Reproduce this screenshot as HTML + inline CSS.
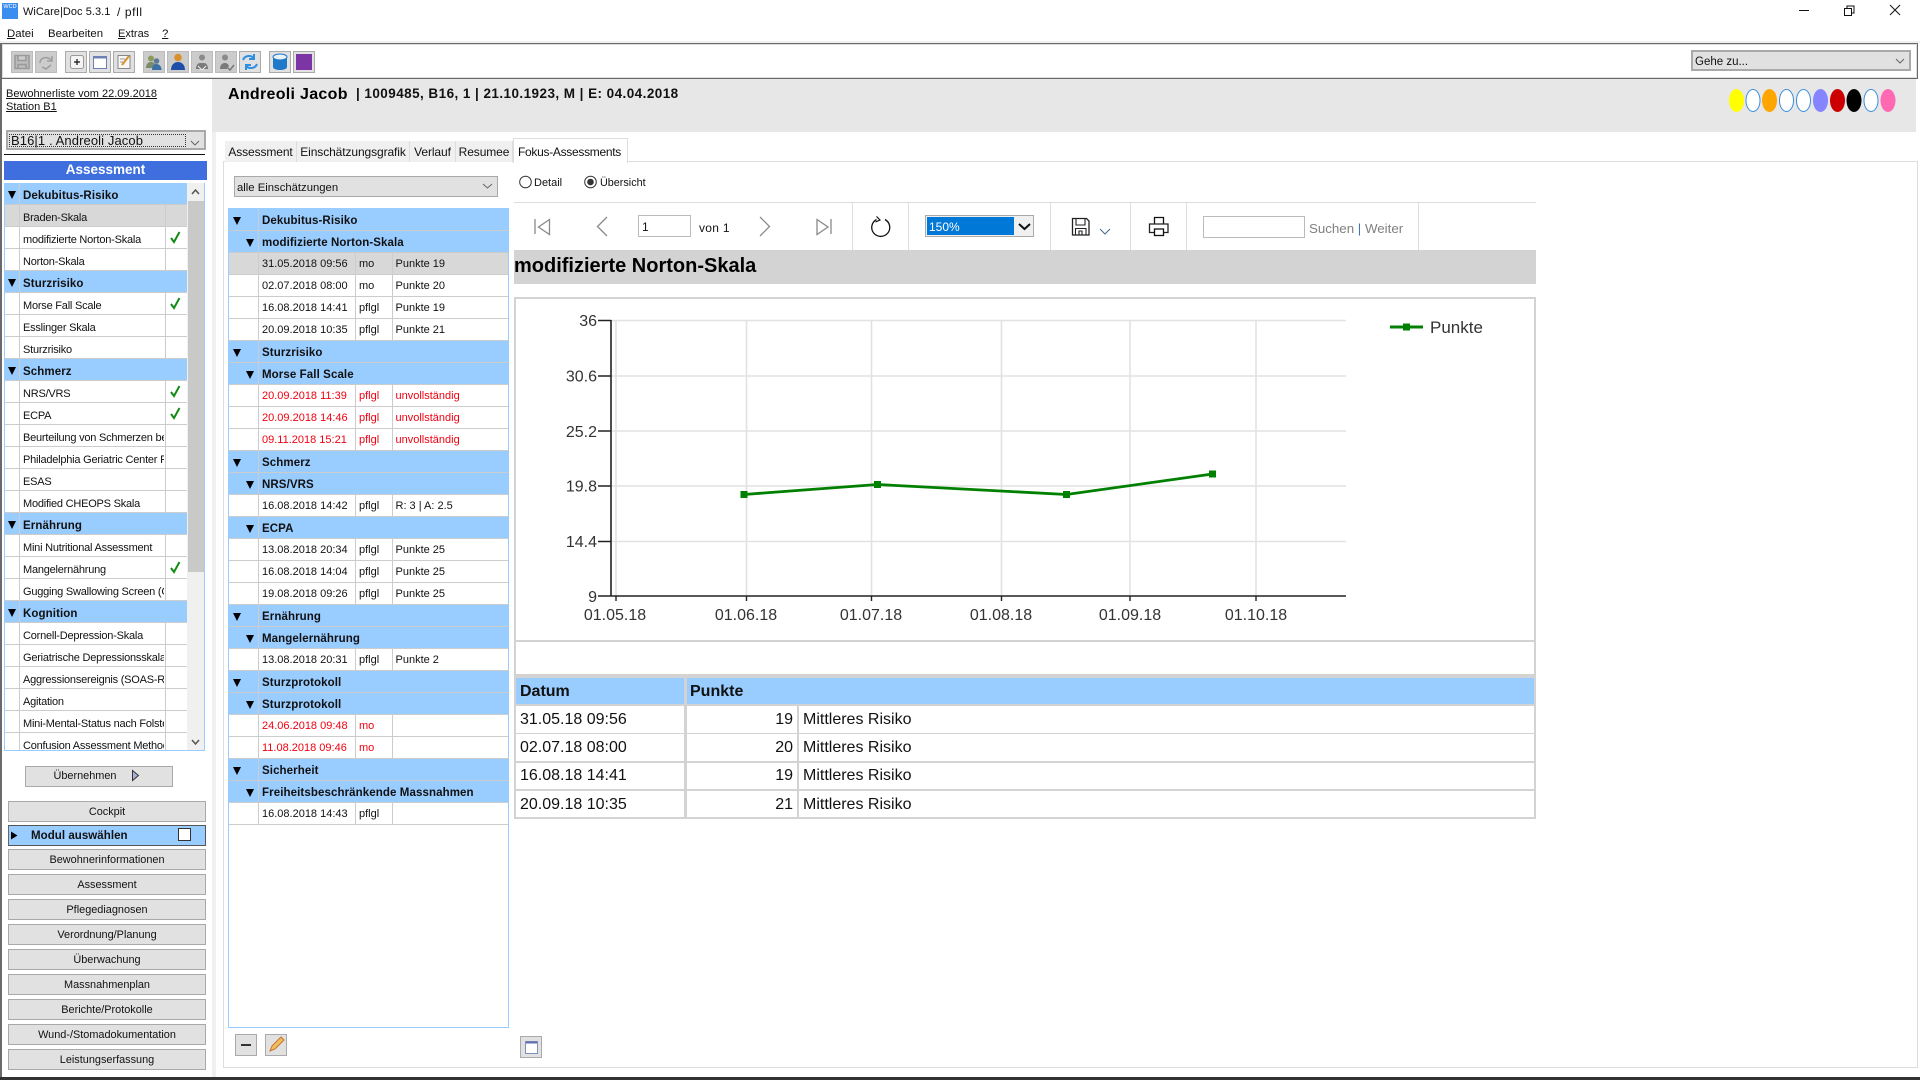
<!DOCTYPE html>
<html lang="de"><head><meta charset="utf-8"><title>WiCare|Doc</title>
<style>
html,body{margin:0;padding:0;background:#fff}
body{width:1920px;height:1080px;position:relative;overflow:hidden;font:11px "Liberation Sans",sans-serif;color:#111}
.a{position:absolute;white-space:nowrap;box-sizing:border-box}
.u{text-decoration:underline}
.b{background:#e1e1e1;border:1px solid #a9a9a9;text-align:center;font-size:10.9px;line-height:21px;height:21px;left:8px;width:198px}
.tb{width:22px;height:22px;top:51px;background:#e1e1e1;border:1px solid #aaa}
.tb.d{background:#ccc;border-color:#bbb}
.tab{top:141px;height:21px;background:#f0f0f0;border-right:1px solid #ddd;font-size:12px;line-height:22px;text-align:center;letter-spacing:-.1px}
#ls{left:4px;top:183px;width:201px;height:568px;border:1px solid #9cf;border-top:0;overflow:hidden}
.r{position:relative;height:22px;width:182px;border-bottom:1px solid #ccc;box-sizing:border-box;line-height:21px;overflow:hidden}
.r i{position:absolute;left:14px;top:0;bottom:0;width:1px;background:#ccc}
.r em{position:absolute;left:160px;top:0;bottom:0;width:1px;background:#ccc}
.r span{position:absolute;left:18px;top:3px;width:141px;overflow:hidden;white-space:nowrap;letter-spacing:-.22px}
.h{background:#9cf}
.h span{font-weight:bold;font-size:11.5px;letter-spacing:.1px;width:160px}
.h em{display:none}
.s{background:#d8d8d8}
.t{position:absolute;width:0;height:0;border-left:4.5px solid transparent;border-right:4.5px solid transparent;border-top:8px solid #000;top:8px;left:3px}
#tr{left:228px;top:208px;width:281px;height:820px;border:1px solid #9cf;overflow:hidden}
.q{position:relative;height:22px;width:279px;border-bottom:1px solid #ccc;box-sizing:border-box;line-height:21px;white-space:nowrap;overflow:hidden}
.q i{position:absolute;top:0;bottom:0;width:1px;background:#ccc}
.q i.c1{left:29px}.q i.c2{left:126px}.q i.c3{left:163px}
.q span{position:absolute;top:1px}
.q .d1{left:33px}.q .d2{left:130px}.q .d3{left:166.5px}
.q.h .d1{font-weight:bold;font-size:11.5px;letter-spacing:.1px;top:2px}
.q .t{left:3.5px}
.q .t.k{left:16.5px}
.red{color:#f00010}
.sep{background:#ddd;width:1px;top:202px;height:48px}
.td{font-size:16px;line-height:28px;color:#111;background:#fff;height:27px}
</style></head><body>

<!-- title bar -->
<div class="a" style="left:2px;top:3px;width:16px;height:16px;background:#3a8ef0;color:#fff;font-size:5.5px;line-height:9px;text-align:center">WCD</div>
<div class="a" style="left:23px;top:5px;font-size:11px;line-height:14px;letter-spacing:.05px">WiCare|Doc 5.3.1</div>
<div class="a" style="left:117px;top:5px;font-size:12px;line-height:14px;letter-spacing:.6px">/ pfll</div>
<div class="a" style="left:7px;top:27px;font-size:11.4px;line-height:14px"><span class="u">D</span>atei</div>
<div class="a" style="left:48px;top:27px;font-size:11.4px;line-height:14px">Bearbeiten</div>
<div class="a" style="left:118px;top:27px;font-size:11px;line-height:14px"><span class="u">E</span>xtras</div>
<div class="a u" style="left:162px;top:27px;font-size:11.4px;line-height:14px">?</div>

<!-- toolbar frame -->
<div class="a" style="left:0;top:41px;width:1920px;height:2px;background:#f0f0f0"></div>
<div class="a" style="left:0;top:43px;width:1918px;height:36px;border:1px solid #6a6a6a;border-left-width:2px;background:#fff"></div>
<div class="a" style="left:2px;top:44px;width:1915px;height:34px;border:1px solid #ddd"></div>
<div class="a tb d" style="left:11px"></div><div class="a tb d" style="left:35px"></div>
<div class="a tb" style="left:65px"></div><div class="a tb" style="left:89px"></div><div class="a tb" style="left:113px"></div>
<div class="a tb d" style="left:143px"></div><div class="a tb d" style="left:167px"></div><div class="a tb d" style="left:191px"></div><div class="a tb d" style="left:215px"></div><div class="a tb" style="left:239px"></div>
<div class="a tb" style="left:269px"></div><div class="a tb" style="left:293px"></div>
<div class="a" style="left:1691px;top:50px;width:220px;height:21px;background:#e1e1e1;border:2px solid #a9a9a9;font-size:11.5px;line-height:20px;padding-left:2px">Gehe zu...</div>

<!-- left edge / bottom -->
<div class="a" style="left:0;top:79px;width:2px;height:1000px;background:#6a6a6a"></div>
<div class="a" style="left:0;top:1077px;width:1920px;height:3px;background:#333"></div>

<!-- header -->
<div class="a" style="left:212px;top:79px;width:1704px;height:53px;background:#e7e7e7"></div>
<div class="a" style="left:212px;top:132px;width:4px;height:945px;background:#f0f0f0"></div>
<div class="a" style="left:228px;top:85px;font-weight:bold;font-size:16px;line-height:20px;letter-spacing:.3px;color:#000">Andreoli Jacob</div>
<div class="a" style="left:356px;top:85px;font-weight:bold;font-size:13.5px;line-height:17px;letter-spacing:.44px;color:#111">| 1009485, B16, 1 | 21.10.1923, M | E: 04.04.2018</div>

<!-- sidebar top -->
<div class="a u" style="left:6px;top:88px;line-height:13px">Bewohnerliste vom 22.09.2018</div>
<div class="a u" style="left:6px;top:101px;line-height:13px">Station B1</div>
<div class="a" style="left:6px;top:130px;width:200px;height:20px;background:#e1e1e1;border:2px solid #a9a9a9"></div>
<div class="a" style="left:9px;top:134px;width:177px;height:13px;border:1px dotted #333;font-size:13px;line-height:11px;padding-left:1px;letter-spacing:.1px">B16|1 . Andreoli Jacob</div>
<div class="a" style="left:4px;top:154px;width:201px;height:1px;background:#111"></div>
<div class="a" style="left:4px;top:161px;width:203px;height:19px;background:#3f6fdf;color:#fff;font-weight:bold;font-size:13.5px;line-height:18px;text-align:center">Assessment</div>

<!-- assessment list -->
<div class="a" id="ls">
<div class="r h"><b class="t"></b><i></i><span>Dekubitus-Risiko</span></div>
<div class="r s"><i></i><em></em><span>Braden-Skala</span></div>
<div class="r"><i></i><em></em><span>modifizierte Norton-Skala</span></div>
<div class="r"><i></i><em></em><span>Norton-Skala</span></div>
<div class="r h"><b class="t"></b><i></i><span>Sturzrisiko</span></div>
<div class="r"><i></i><em></em><span>Morse Fall Scale</span></div>
<div class="r"><i></i><em></em><span>Esslinger Skala</span></div>
<div class="r"><i></i><em></em><span>Sturzrisiko</span></div>
<div class="r h"><b class="t"></b><i></i><span>Schmerz</span></div>
<div class="r"><i></i><em></em><span>NRS/VRS</span></div>
<div class="r"><i></i><em></em><span>ECPA</span></div>
<div class="r"><i></i><em></em><span>Beurteilung von Schmerzen bei Demenz</span></div>
<div class="r"><i></i><em></em><span>Philadelphia Geriatric Center Pain</span></div>
<div class="r"><i></i><em></em><span>ESAS</span></div>
<div class="r"><i></i><em></em><span>Modified CHEOPS Skala</span></div>
<div class="r h"><b class="t"></b><i></i><span>Ernährung</span></div>
<div class="r"><i></i><em></em><span>Mini Nutritional Assessment</span></div>
<div class="r"><i></i><em></em><span>Mangelernährung</span></div>
<div class="r"><i></i><em></em><span>Gugging Swallowing Screen (GUSS)</span></div>
<div class="r h"><b class="t"></b><i></i><span>Kognition</span></div>
<div class="r"><i></i><em></em><span>Cornell-Depression-Skala</span></div>
<div class="r"><i></i><em></em><span>Geriatrische Depressionsskala</span></div>
<div class="r"><i></i><em></em><span>Aggressionsereignis (SOAS-R)</span></div>
<div class="r"><i></i><em></em><span>Agitation</span></div>
<div class="r"><i></i><em></em><span>Mini-Mental-Status nach Folstein</span></div>
<div class="r"><i></i><em></em><span>Confusion Assessment Method</span></div>
<div class="a" style="left:182px;top:0;width:17px;height:568px;background:#f0f0f0"></div>
<div class="a" style="left:183px;top:18px;width:16px;height:371px;background:#c9c9c9"></div>
</div>

<!-- sidebar buttons -->
<div class="a b" style="left:25px;top:766px;width:148px;line-height:19px;padding-right:28px">Übernehmen</div>
<div class="a b" style="top:801px">Cockpit</div>
<div class="a" style="left:8px;top:825px;width:198px;height:21px;background:#9cf;border:1px solid #555;border-left-color:#666"></div>
<div class="a" style="left:31px;top:828px;font-weight:bold;font-size:11.5px;line-height:16px;letter-spacing:.05px">Modul auswählen</div>
<div class="a" style="left:178px;top:828px;width:13px;height:13px;background:#fff;border:1px solid #333"></div>
<div class="a b" style="top:849px">Bewohnerinformationen</div>
<div class="a b" style="top:874px">Assessment</div>
<div class="a b" style="top:899px">Pflegediagnosen</div>
<div class="a b" style="top:924px">Verordnung/Planung</div>
<div class="a b" style="top:949px">Überwachung</div>
<div class="a b" style="top:974px">Massnahmenplan</div>
<div class="a b" style="top:999px">Berichte/Protokolle</div>
<div class="a b" style="top:1024px">Wund-/Stomadokumentation</div>
<div class="a b" style="top:1049px">Leistungserfassung</div>

<!-- tabs and panel -->
<div class="a" style="left:223px;top:161px;width:1695px;height:907px;border:1px solid #ddd"></div>
<div class="a tab" style="left:225px;width:72px">Assessment</div>
<div class="a tab" style="left:297px;width:113px">Einschätzungsgrafik</div>
<div class="a tab" style="left:410px;width:46px">Verlauf</div>
<div class="a tab" style="left:456px;width:57px">Resumee</div>
<div class="a tab" style="left:513px;top:138px;height:25px;width:115px;background:#fff;border:1px solid #ddd;border-bottom:0;line-height:26px;letter-spacing:-.3px;padding-right:2px">Fokus-Assessments</div>
<div class="a" style="left:234px;top:176px;width:264px;height:21px;background:#e1e1e1;border:1px solid #a9a9a9;line-height:23px;padding-left:2px;font-size:11.3px">alle Einschätzungen</div>
<div class="a" style="left:534px;top:175px;line-height:16px;font-size:11px">Detail</div>
<div class="a" style="left:600px;top:175px;line-height:16px;font-size:10.8px">Übersicht</div>

<!-- tree -->
<div class="a" id="tr">
<div class="q h"><b class="t"></b><i class="c1"></i><span class="d1">Dekubitus-Risiko</span></div>
<div class="q h"><b class="t k"></b><i class="c1"></i><span class="d1">modifizierte Norton-Skala</span></div>
<div class="q s"><i class="c1"></i><i class="c2"></i><i class="c3"></i><span class="d1">31.05.2018 09:56</span><span class="d2">mo</span><span class="d3">Punkte 19</span></div>
<div class="q"><i class="c1"></i><i class="c2"></i><i class="c3"></i><span class="d1">02.07.2018 08:00</span><span class="d2">mo</span><span class="d3">Punkte 20</span></div>
<div class="q"><i class="c1"></i><i class="c2"></i><i class="c3"></i><span class="d1">16.08.2018 14:41</span><span class="d2">pflgl</span><span class="d3">Punkte 19</span></div>
<div class="q"><i class="c1"></i><i class="c2"></i><i class="c3"></i><span class="d1">20.09.2018 10:35</span><span class="d2">pflgl</span><span class="d3">Punkte 21</span></div>
<div class="q h"><b class="t"></b><i class="c1"></i><span class="d1">Sturzrisiko</span></div>
<div class="q h"><b class="t k"></b><i class="c1"></i><span class="d1">Morse Fall Scale</span></div>
<div class="q red"><i class="c1"></i><i class="c2"></i><i class="c3"></i><span class="d1">20.09.2018 11:39</span><span class="d2">pflgl</span><span class="d3">unvollständig</span></div>
<div class="q red"><i class="c1"></i><i class="c2"></i><i class="c3"></i><span class="d1">20.09.2018 14:46</span><span class="d2">pflgl</span><span class="d3">unvollständig</span></div>
<div class="q red"><i class="c1"></i><i class="c2"></i><i class="c3"></i><span class="d1">09.11.2018 15:21</span><span class="d2">pflgl</span><span class="d3">unvollständig</span></div>
<div class="q h"><b class="t"></b><i class="c1"></i><span class="d1">Schmerz</span></div>
<div class="q h"><b class="t k"></b><i class="c1"></i><span class="d1">NRS/VRS</span></div>
<div class="q"><i class="c1"></i><i class="c2"></i><i class="c3"></i><span class="d1">16.08.2018 14:42</span><span class="d2">pflgl</span><span class="d3">R: 3 | A: 2.5</span></div>
<div class="q h"><b class="t k"></b><i class="c1"></i><span class="d1">ECPA</span></div>
<div class="q"><i class="c1"></i><i class="c2"></i><i class="c3"></i><span class="d1">13.08.2018 20:34</span><span class="d2">pflgl</span><span class="d3">Punkte 25</span></div>
<div class="q"><i class="c1"></i><i class="c2"></i><i class="c3"></i><span class="d1">16.08.2018 14:04</span><span class="d2">pflgl</span><span class="d3">Punkte 25</span></div>
<div class="q"><i class="c1"></i><i class="c2"></i><i class="c3"></i><span class="d1">19.08.2018 09:26</span><span class="d2">pflgl</span><span class="d3">Punkte 25</span></div>
<div class="q h"><b class="t"></b><i class="c1"></i><span class="d1">Ernährung</span></div>
<div class="q h"><b class="t k"></b><i class="c1"></i><span class="d1">Mangelernährung</span></div>
<div class="q"><i class="c1"></i><i class="c2"></i><i class="c3"></i><span class="d1">13.08.2018 20:31</span><span class="d2">pflgl</span><span class="d3">Punkte 2</span></div>
<div class="q h"><b class="t"></b><i class="c1"></i><span class="d1">Sturzprotokoll</span></div>
<div class="q h"><b class="t k"></b><i class="c1"></i><span class="d1">Sturzprotokoll</span></div>
<div class="q red"><i class="c1"></i><i class="c2"></i><i class="c3"></i><span class="d1">24.06.2018 09:48</span><span class="d2">mo</span></div>
<div class="q red"><i class="c1"></i><i class="c2"></i><i class="c3"></i><span class="d1">11.08.2018 09:46</span><span class="d2">mo</span></div>
<div class="q h"><b class="t"></b><i class="c1"></i><span class="d1">Sicherheit</span></div>
<div class="q h"><b class="t k"></b><i class="c1"></i><span class="d1">Freiheitsbeschränkende Massnahmen</span></div>
<div class="q"><i class="c1"></i><i class="c2"></i><i class="c3"></i><span class="d1">16.08.2018 14:43</span><span class="d2">pflgl</span></div>
</div>
<div class="a tb" style="left:235px;top:1034px"></div>
<div class="a tb" style="left:265px;top:1034px"></div>
<div class="a tb" style="left:520px;top:1036px"></div>

<!-- report toolbar -->
<div class="a" style="left:514px;top:202px;width:1022px;height:1px;background:#ddd"></div>
<div class="a sep" style="left:852px"></div><div class="a sep" style="left:908px"></div><div class="a sep" style="left:1050px"></div><div class="a sep" style="left:1130px"></div><div class="a sep" style="left:1186px"></div><div class="a sep" style="left:1418px"></div>
<div class="a" style="left:638px;top:215px;width:53px;height:22px;border:1px solid #bbb;font-size:12px;line-height:22px;padding-left:3px">1</div>
<div class="a" style="left:699px;top:220px;font-size:12px;line-height:16px;letter-spacing:.3px">von 1</div>
<div class="a" style="left:925px;top:215px;width:109px;height:22px;border:1px solid #aaa;background:#f0f0f0"></div>
<div class="a" style="left:927px;top:217px;width:87px;height:18px;background:#0078d7;color:#fff;font-size:12px;line-height:20px;padding-left:2px">150%</div>
<div class="a" style="left:1203px;top:216px;width:102px;height:22px;border:1px solid #bbb"></div>
<div class="a" style="left:1309px;top:220px;font-size:13.3px;line-height:17px;color:#808080">Suchen <span style="color:#3a78b8">|</span> Weiter</div>
<div class="a" style="left:514px;top:250px;width:1022px;height:34px;background:#d3d3d3;font-weight:bold;font-size:20px;line-height:33px;color:#000">modifizierte Norton-Skala</div>

<!-- chart box -->
<div class="a" style="left:514px;top:297px;width:1022px;height:345px;border:2px solid #d3d3d3;border-bottom-width:2px"></div>
<div class="a" style="left:514px;top:642px;width:2px;height:36px;background:#d3d3d3"></div>
<div class="a" style="left:1534px;top:642px;width:2px;height:36px;background:#d3d3d3"></div>

<!-- table -->
<div class="a" style="left:514px;top:674px;width:1022px;height:145px;background:#d3d3d3"></div>
<div class="a" style="left:516px;top:678px;width:168px;height:26px;background:#9cf;font-weight:bold;font-size:16px;line-height:28px;padding-left:4px;color:#111">Datum</div>
<div class="a" style="left:687px;top:678px;width:847px;height:26px;background:#9cf;font-weight:bold;font-size:16px;line-height:28px;padding-left:3px;color:#111">Punkte</div>
<div class="a td" style="left:516px;top:706px;width:168px;padding-left:4px">31.05.18 09:56</div>
<div class="a td" style="left:687px;top:706px;width:110px;text-align:right;padding-right:4px">19</div>
<div class="a td" style="left:799px;top:706px;width:735px;padding-left:4px">Mittleres Risiko</div>
<div class="a td" style="left:516px;top:734px;width:168px;padding-left:4px">02.07.18 08:00</div>
<div class="a td" style="left:687px;top:734px;width:110px;text-align:right;padding-right:4px">20</div>
<div class="a td" style="left:799px;top:734px;width:735px;padding-left:4px">Mittleres Risiko</div>
<div class="a td" style="left:516px;top:763px;width:168px;height:26px;padding-left:4px;line-height:26px">16.08.18 14:41</div>
<div class="a td" style="left:687px;top:763px;width:110px;height:26px;text-align:right;padding-right:4px;line-height:26px">19</div>
<div class="a td" style="left:799px;top:763px;width:735px;height:26px;padding-left:4px;line-height:26px">Mittleres Risiko</div>
<div class="a td" style="left:516px;top:791px;width:168px;height:26px;padding-left:4px;line-height:27px">20.09.18 10:35</div>
<div class="a td" style="left:687px;top:791px;width:110px;height:26px;text-align:right;padding-right:4px;line-height:27px">21</div>
<div class="a td" style="left:799px;top:791px;width:735px;height:26px;padding-left:4px;line-height:27px">Mittleres Risiko</div>

<!-- overlay vector graphics -->
<svg class="a" style="left:0;top:0" width="1920" height="1080" viewBox="0 0 1920 1080" fill="none">
<!-- window controls -->
<path d="M1799 10.5h10" stroke="#111"/>
<path d="M1844.5 8.5h7v7h-7zM1847 8.5v-2.5h7v7h-2.5" stroke="#111"/>
<path d="M1890 5l10 10M1900 5l-10 10" stroke="#111"/>
<!-- toolbar icons -->
<path d="M15 55.500h14v13h-14z M18 55.500v5h8v-5 M18 68.500v-4h8v4" stroke="#9a9a9a" stroke-width="1.600" fill="#bdbdbd"/>
<path d="M40 63c0-5 6-7 10-4l2 2m0-5v5h-5M42 67l4 2 5-4" stroke="#a0a0a0" stroke-width="1.600"/>
<rect x="70.500" y="55.500" width="13" height="13" rx="2" fill="#f4f4f4" stroke="#999"/><path d="M74 62h6M77 59v6" stroke="#111" stroke-width="1.200"/>
<rect x="93.500" y="56.500" width="13" height="12" fill="#fff" stroke="#6f7fb5"/><path d="M94 57.500h12" stroke="#6f7fb5" stroke-width="2"/>
<rect x="118" y="55.500" width="12" height="13" fill="#f8f8f8" stroke="#888"/><path d="M122 65l7-9" stroke="#d8902a" stroke-width="2"/><path d="M120 59h5M120 62h3" stroke="#999"/>
<circle cx="151" cy="58.500" r="3" fill="#8a9a5a"/><path d="M146 68c0-4 2-6 5-6s5 2 5 6z" fill="#7a8a6a"/><circle cx="156.500" cy="61" r="2.800" fill="#5a7a9a"/><path d="M152 70c0-4 2-6 4.500-6s5 2 5 6z" fill="#3a6fa8"/>
<circle cx="178" cy="57.500" r="3.800" fill="#d8912a"/><path d="M171 70c0-5 3-8 7-8s7 3 7 8z" fill="#1e4fa8"/>
<circle cx="202" cy="57.500" r="3" fill="#8a8a8a"/><path d="M196 69c0-4 2-6 4-6h4c2 0 4 2 4 6z" fill="#7a7a7a"/><path d="M198 66l4 4 4-4" stroke="#eee"/>
<circle cx="225" cy="57.500" r="3" fill="#8a8a8a"/><path d="M220 69c0-4 2-6 5-6 2 0 3 1 4 3l-2 3z" fill="#7a7a7a"/><path d="M228 68l2 2 4-5" stroke="#777" stroke-width="1.500"/>
<path d="M243 60c2-5 8-5 11-2m0-4v5h-5" stroke="#2d8fe0" stroke-width="2"/><path d="M257 64c-2 5-8 5-11 2m0 4v-5h5" stroke="#2d8fe0" stroke-width="2"/>
<path d="M273 57v10c0 2 4 3 7 3s7-1 7-3v-10z" fill="#1f78c8"/><ellipse cx="280" cy="57" rx="7" ry="3" fill="#e8f0f8" stroke="#1f78c8"/>
<rect x="296" y="54" width="16" height="16" fill="#7d35a5"/>
<!-- combos -->
<path d="M191 141l4 4 4-4" stroke="#666"/>
<path d="M1896 59l4 4 4-4" stroke="#666"/>
<path d="M483 184l4.500 4 4.500-4" stroke="#666"/>
<!-- scroll arrows -->
<path d="M192 194l3.500-4 3.500 4M192 740l3.500 4 3.500-4" stroke="#555" stroke-width="1.500"/>
<!-- checks -->
<g stroke="#168a16" stroke-width="2"><path d="M171 238l3 4 5.500-10"/><path d="M171 304l3 4 5.500-10"/><path d="M171 392l3 4 5.500-10"/><path d="M171 414l3 4 5.500-10"/><path d="M171 568l3 4 5.500-10"/></g>
<!-- Übernehmen arrow, modul arrow -->
<path d="M132.500 770.500l6 5-6 5z" fill="#a8b0d8" stroke="#333"/>
<path d="M11 831.500l6.500 4-6.500 4z" fill="#000"/>
<!-- radios -->
<circle cx="525.500" cy="182" r="5.800" fill="#fff" stroke="#333"/>
<circle cx="590.500" cy="182" r="5.800" fill="#fff" stroke="#333"/><circle cx="590.500" cy="182" r="3.300" fill="#333"/>
<!-- dots -->
<ellipse cx="1736.500" cy="100.500" rx="7.500" ry="11.500" fill="#ff0"/>
<ellipse cx="1753" cy="100.500" rx="7" ry="11" fill="#fff" stroke="#3a8fdc"/>
<ellipse cx="1769.500" cy="100.500" rx="7.500" ry="11.500" fill="#ffa500"/>
<ellipse cx="1786.500" cy="100.500" rx="7" ry="11" fill="#fff" stroke="#3a8fdc"/>
<ellipse cx="1803.500" cy="100.500" rx="7" ry="11" fill="#fff" stroke="#3a8fdc"/>
<ellipse cx="1820.500" cy="100.500" rx="7.500" ry="11.500" fill="#8585ff"/>
<ellipse cx="1837.500" cy="100.500" rx="7.500" ry="11.500" fill="#c00"/>
<ellipse cx="1854" cy="100.500" rx="7.500" ry="11.500" fill="#000"/>
<ellipse cx="1871" cy="100.500" rx="7" ry="11" fill="#fff" stroke="#3a8fdc"/>
<ellipse cx="1888" cy="100.500" rx="7.500" ry="11.500" fill="#ff69b4"/>
<!-- nav icons -->
<g stroke="#8a8a8a" stroke-width="1.300"><path d="M535 219v15"/><path d="M549.500 219.500l-11 7.500 11 7.500z"/><path d="M607 217l-9.500 9.500 9.500 9.500"/><path d="M760 217l9.500 9.500-9.500 9.500"/><path d="M817 219.500l11 7.500-11 7.500z"/><path d="M831 219v15"/></g>
<path d="M885 219.500A9 9 0 1 1 876.500 219.500" stroke="#111" stroke-width="1.300"/><path d="M876.500 216.500l3.500 3.500-4.500 2" stroke="#111" stroke-width="1.200"/>
<path d="M1019 224l5.500 5 5.500-5" stroke="#111" stroke-width="2"/>
<!-- save / print -->
<path d="M1072.500 218.500h14l2.500 2.500v14h-16.500z" stroke="#222" stroke-width="1.300"/><path d="M1076 219v6h9v-6M1075.500 235v-6.500h10.500v6.500M1079 235v-4h3v4" stroke="#222" stroke-width="1.100"/>
<path d="M1100 229l5 5 5-5" stroke="#456a8a"/>
<path d="M1154.500 224v-6.500h9v6.500" stroke="#111" stroke-width="1.300"/><path d="M1154 232.500h-4.500v-8.500h18.500v8.500h-4.500" stroke="#222" stroke-width="1.300"/><rect x="1154.500" y="229" width="9" height="6.500" fill="#fff" stroke="#111" stroke-width="1.300"/>
<!-- bottom buttons -->
<path d="M241 1045h10" stroke="#333" stroke-width="2"/>
<path d="M270 1051l2-5 9-9 3 3-9 9z" fill="#f0c060" stroke="#c8702a"/>
<rect x="525.500" y="1041.500" width="12" height="12" fill="#fff" stroke="#7f8fc0"/><path d="M526 1042.500h11" stroke="#5f6fb0" stroke-width="2"/>
<!-- chart -->
<g stroke="#e2e2e2" stroke-width="1.600">
<path d="M611 320.500H1346M611 376H1346M611 431H1346M611 486H1346M611 541.500H1346"/>
<path d="M616 320V596M746.500 320V596M871.500 320V596M1001.500 320V596M1130 320V596M1256 320V596"/>
</g>
<path d="M611 320V596.500M598 320.500H611M598 376H611M598 431H611M598 486H611M598 541.500H611M598 596H1346" stroke="#222" stroke-width="1.600"/>
<path d="M616 596V601M746.500 596V601M871.500 596V601M1001.500 596V601M1130 596V601M1256 596V601" stroke="#222" stroke-width="1.400"/>
<path d="M744 494.500L877.500 484.500L1066.500 494.500L1212.500 474" stroke="#008000" stroke-width="2.800"/>
<g fill="#008000"><rect x="740.500" y="491" width="7" height="7"/><rect x="874" y="481" width="7" height="7"/><rect x="1063" y="491" width="7" height="7"/><rect x="1209" y="470.500" width="7" height="7"/><rect x="1390" y="325.500" width="33" height="3"/><rect x="1403" y="323.500" width="7" height="7"/></g>
<g font-family="Liberation Sans, sans-serif" font-size="16" fill="#333">
<g text-anchor="end"><text x="597" y="326">36</text><text x="597" y="381.500">30.6</text><text x="597" y="437">25.2</text><text x="597" y="491.500">19.8</text><text x="597" y="547">14.4</text><text x="597" y="602">9</text></g>
<g text-anchor="middle"><text x="615" y="620">01.05.18</text><text x="746" y="620">01.06.18</text><text x="871" y="620">01.07.18</text><text x="1001" y="620">01.08.18</text><text x="1130" y="620">01.09.18</text><text x="1256" y="620">01.10.18</text></g>
<text x="1430" y="333" font-size="17">Punkte</text>
</g>
</svg>
</body></html>
